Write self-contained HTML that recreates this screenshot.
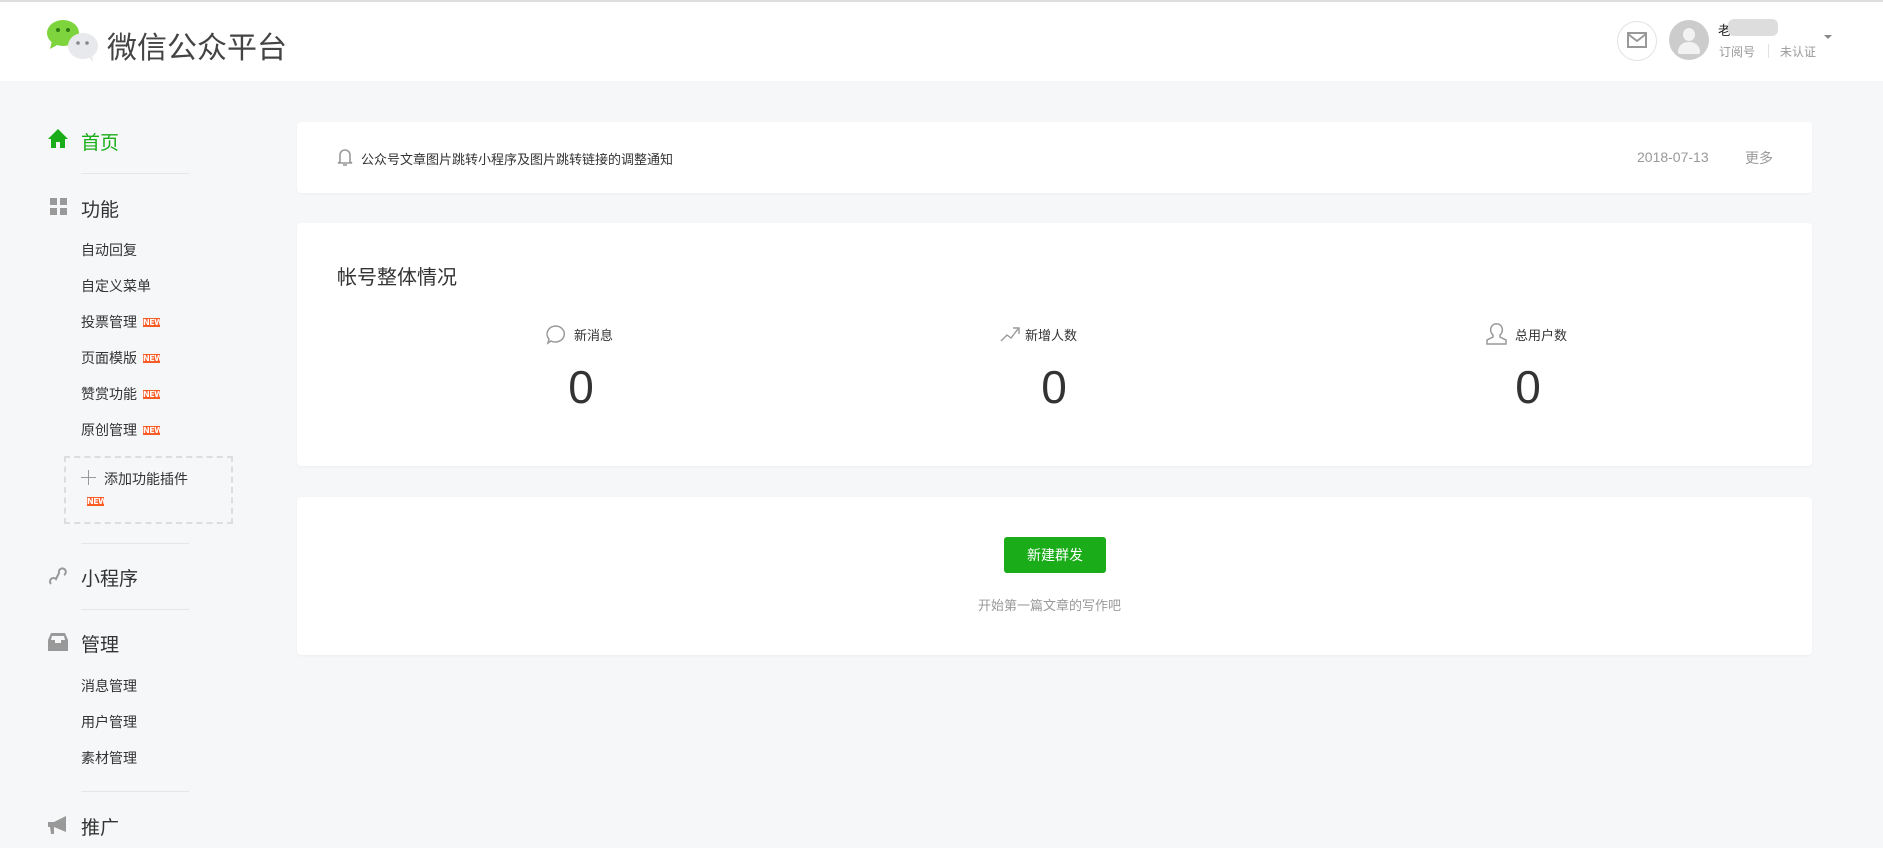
<!DOCTYPE html>
<html><head><meta charset="utf-8"><style>
*{margin:0;padding:0;box-sizing:border-box}
body{width:1883px;height:848px;background:#f6f7f9;font-family:"Liberation Sans","Noto Sans CJK SC",sans-serif;color:#333;position:relative;overflow:hidden}
.a{position:absolute;white-space:nowrap}
.hdr{position:absolute;left:0;top:0;width:1883px;height:81px;background:#fff;border-top:2px solid #ddd}
.card{position:absolute;left:297px;width:1515px;background:#fff;border-radius:4px;box-shadow:0 1px 2px rgba(0,0,0,.04)}
.sep{position:absolute;left:81px;width:108px;height:1px;background:#e4e6e9}
.m1{font-size:19px;color:#333}
.m2{font-size:14px;color:#333}
.new{position:absolute;width:17px;height:9px;background:#fa5a23;color:#fff;font-size:8px;line-height:9px;text-align:center;font-weight:bold;overflow:hidden;font-family:"DejaVu Sans",sans-serif;letter-spacing:-0.5px}
</style></head><body>
<div class="hdr"></div>
<svg class="a" style="left:46px;top:18px" width="54" height="44" viewBox="0 0 54 44">
<ellipse cx="17" cy="15" rx="16" ry="13" fill="#7ed43c"/><path d="M6 23 L4 31 L13 26Z" fill="#7ed43c"/>
<circle cx="12" cy="12" r="2" fill="#2a7d12"/><circle cx="22" cy="12" r="2" fill="#2a7d12"/>
<ellipse cx="37" cy="28" rx="15" ry="13" fill="#e8e9ec"/><path d="M42 38 L47 44 L46 36Z" fill="#e8e9ec"/>
<circle cx="32" cy="25" r="1.8" fill="#888"/><circle cx="41" cy="25" r="1.8" fill="#888"/></svg>
<div class="a" style="left:107px;top:23px;font-size:30px;color:#444">微信公众平台</div>
<div class="a" style="left:1617px;top:21px;width:40px;height:40px;border:1px solid #e2e2e2;border-radius:50%"></div>
<svg class="a" style="left:1627px;top:32px" width="20" height="17"><rect x="1" y="1" width="18" height="14" fill="none" stroke="#999" stroke-width="2"/><path d="M1 2 L10 9 L19 2" fill="none" stroke="#999" stroke-width="2"/></svg>
<div class="a" style="left:1669px;top:20px;width:40px;height:40px;border-radius:50%;background:#ccc;overflow:hidden"><div style="position:absolute;left:14px;top:8px;width:12px;height:13px;border-radius:50%;background:#f2f2f2"></div><div style="position:absolute;left:9px;top:22px;width:22px;height:12px;border-radius:10px 10px 2px 2px;background:#f2f2f2"></div></div>
<div class="a" style="left:1718px;top:20px;font-size:13px;color:#222">老</div>
<div class="a" style="left:1728px;top:19px;width:50px;height:17px;background:#ddd;border-radius:6px"></div>
<div class="a" style="left:1719px;top:43px;font-size:12px;color:#999">订阅号</div>
<div class="a" style="left:1768px;top:44px;width:1px;height:14px;background:#e2e2e2"></div>
<div class="a" style="left:1780px;top:43px;font-size:12px;color:#999">未认证</div>
<div class="a" style="left:1824px;top:35px;border:4px solid transparent;border-top:4px solid #888"></div>

<svg class="a" style="left:48px;top:129px" width="20" height="19"><path d="M10 0 L20 10 L17 10 L17 19 L12 19 L12 13 L8 13 L8 19 L3 19 L3 10 L0 10Z" fill="#1aad19"/></svg>
<div class="a m1" style="left:81px;top:128px;color:#1aad19">首页</div>
<div class="sep" style="top:173px"></div>
<svg class="a" style="left:50px;top:198px" width="18" height="18"><rect width="7" height="7" fill="#999"/><rect x="10" width="7" height="7" fill="#999"/><rect y="10" width="7" height="7" fill="#999"/><rect x="10" y="10" width="7" height="7" fill="#999"/></svg>
<div class="a m1" style="left:81px;top:195px">功能</div>
<div class="a m2" style="left:81px;top:240px">自动回复</div>
<div class="a m2" style="left:81px;top:276px">自定义菜单</div>
<div class="a m2" style="left:81px;top:312px">投票管理</div><div class="new" style="left:143px;top:318px">NEW</div>
<div class="a m2" style="left:81px;top:348px">页面模版</div><div class="new" style="left:143px;top:354px">NEW</div>
<div class="a m2" style="left:81px;top:384px">赞赏功能</div><div class="new" style="left:143px;top:390px">NEW</div>
<div class="a m2" style="left:81px;top:420px">原创管理</div><div class="new" style="left:143px;top:426px">NEW</div>
<div class="a" style="left:64px;top:456px;width:169px;height:68px;border:2px dashed #ddd"></div>
<div class="a" style="left:81px;top:477px;width:15px;height:1px;background:#999"></div>
<div class="a" style="left:88px;top:470px;width:1px;height:15px;background:#999"></div>
<div class="a m2" style="left:104px;top:469px">添加功能插件</div>
<div class="new" style="left:87px;top:497px">NEW</div>
<div class="sep" style="top:543px"></div>
<svg class="a" style="left:48px;top:566px" width="20" height="20"><path d="M3 18 A3.5 3.5 0 1 1 8 13 L11 7 A3.5 3.5 0 1 1 16 9" fill="none" stroke="#999" stroke-width="2"/></svg>
<div class="a m1" style="left:81px;top:564px">小程序</div>
<div class="sep" style="top:609px"></div>
<svg class="a" style="left:48px;top:633px" width="20" height="18"><path d="M3 0 L17 0 L20 7 L20 18 L0 18 L0 7Z" fill="#999"/><path d="M4 3 L16 3 L17 7 L13 7 L13 10 L7 10 L7 7 L3 7Z" fill="#f6f7f9"/></svg>
<div class="a m1" style="left:81px;top:630px">管理</div>
<div class="a m2" style="left:81px;top:676px">消息管理</div>
<div class="a m2" style="left:81px;top:712px">用户管理</div>
<div class="a m2" style="left:81px;top:748px">素材管理</div>
<div class="sep" style="top:791px"></div>
<svg class="a" style="left:48px;top:816px" width="20" height="19"><path d="M0 6 L6 6 L18 0 L18 16 L6 11 L6 18 L3 18 L2 11 L0 11Z" fill="#999"/></svg>
<div class="a m1" style="left:81px;top:813px">推广</div>

<div class="card" style="top:122px;height:71px"></div>
<svg class="a" style="left:337px;top:148px" width="16" height="19"><path d="M3 14 L3 7 A5 5 0 0 1 13 7 L13 14 L15 15 L1 15Z" fill="none" stroke="#999" stroke-width="1.6"/><path d="M6 17 L10 17" stroke="#999" stroke-width="1.6"/></svg>
<div class="a" style="left:361px;top:149px;font-size:13px;color:#333">公众号文章图片跳转小程序及图片跳转链接的调整通知</div>
<div class="a" style="left:1637px;top:149px;font-size:14px;color:#999">2018-07-13</div>
<div class="a" style="left:1745px;top:148px;font-size:14px;color:#999">更多</div>

<div class="card" style="top:223px;height:243px"></div>
<div class="a" style="left:337px;top:261px;font-size:20px;color:#333">帐号整体情况</div>
<svg class="a" style="left:546px;top:325px" width="20" height="20"><path d="M10 1 A9 8 0 1 1 5 16 L2 18 L3 14 A9 8 0 0 1 10 1Z" fill="none" stroke="#999" stroke-width="1.5"/></svg>
<div class="a" style="left:574px;top:325px;font-size:13px;color:#333">新消息</div>
<svg class="a" style="left:1000px;top:325px" width="20" height="18"><path d="M1 16 L7 10 L11 13 L18 4 M13 3 L19 3 L19 9" fill="none" stroke="#999" stroke-width="1.4"/></svg>
<div class="a" style="left:1025px;top:325px;font-size:13px;color:#333">新增人数</div>
<svg class="a" style="left:1486px;top:323px" width="21" height="22"><path d="M10.5 1 A5 6 0 0 1 14 12 L14 14 L20 17 L20 21 L1 21 L1 17 L7 14 L7 12 A5 6 0 0 1 10.5 1Z" fill="none" stroke="#999" stroke-width="1.5"/></svg>
<div class="a" style="left:1515px;top:325px;font-size:13px;color:#333">总用户数</div>
<div class="a" style="left:556px;top:360px;width:50px;text-align:center;font-size:46px;color:#333">0</div>
<div class="a" style="left:1029px;top:360px;width:50px;text-align:center;font-size:46px;color:#333">0</div>
<div class="a" style="left:1503px;top:360px;width:50px;text-align:center;font-size:46px;color:#333">0</div>

<div class="card" style="top:497px;height:158px"></div>
<div class="a" style="left:1004px;top:537px;width:102px;height:36px;background:#1aad19;border-radius:3px;color:#fff;font-size:14px;line-height:36px;text-align:center">新建群发</div>
<div class="a" style="left:978px;top:595px;font-size:13px;color:#999">开始第一篇文章的写作吧</div>
</body></html>
